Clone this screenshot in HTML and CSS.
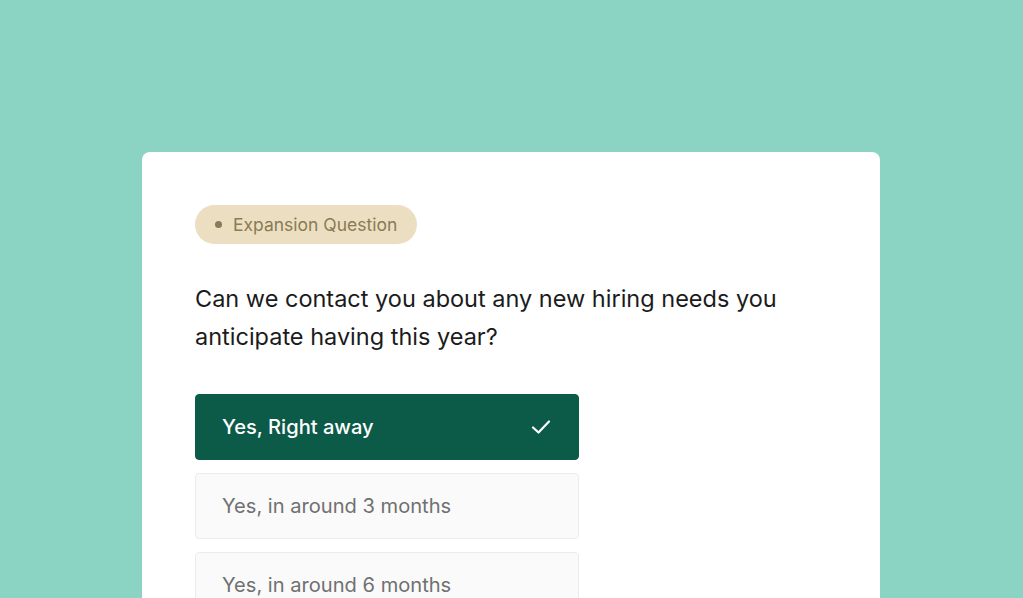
FILE: index.html
```html
<!DOCTYPE html>
<html>
<head>
<meta charset="utf-8">
<link rel="stylesheet" href="styles.css">
</head>
<body>
<div class="page">
  <div class="card">
    <div class="badge"><span class="dot"></span><span>Expansion Question</span></div>
    <h1 class="question">Can we contact you about any new hiring needs you anticipate having this year?</h1>
    <div class="options">
      <div class="option selected">
        <span>Yes, Right away</span>
        <svg class="check" width="20" height="16" viewBox="0 0 20 16"><path d="M2 8.5 L7.5 13.5 L18 2.5" fill="none" stroke="#fff" stroke-width="2.2" stroke-linecap="round" stroke-linejoin="round"/></svg>
      </div>
      <div class="option"><span>Yes, in around 3 months</span></div>
      <div class="option"><span>Yes, in around 6 months</span></div>
    </div>
  </div>
</div>
</body>
</html>
```
FILE: styles.css
```css
html, body {
  margin: 0;
  padding: 0;
  height: 100%;
  overflow: hidden;
}
body {
  background: #8bd3c3;
  font-family: Inter, "Noto Sans", sans-serif;
}
.page {
  padding: 152px 143px 0 142px;
}
.card {
  background: #ffffff;
  border-radius: 8px 8px 0 0;
  padding: 53px 53px 0 53px;
  height: 446px;
  overflow: hidden;
  box-sizing: border-box;
}
.badge {
  display: inline-flex;
  align-items: center;
  gap: 11px;
  height: 39px;
  padding: 0 20px 0 20px;
  border-radius: 20px;
  background: #ecdfc1;
  color: #8a7a55;
  font-size: 17.5px;
  letter-spacing: 0;
  box-sizing: border-box;
}
.dot {
  width: 7px;
  height: 7px;
  border-radius: 50%;
  background: #8a7a55;
}
.question {
  margin: 36px 0 0 0;
  max-width: 600px;
  font-size: 23.5px;
  font-weight: 400;
  line-height: 38px;
  color: #1b1b1b;
  letter-spacing: 0;
}
.options {
  margin-top: 38px;
  width: 384px;
  display: flex;
  flex-direction: column;
  gap: 13px;
}
.option {
  height: 66px;
  box-sizing: border-box;
  flex-shrink: 0;
  border: 1px solid #ececec;
  border-radius: 4px;
  background: #fafafa;
  display: flex;
  align-items: center;
  justify-content: space-between;
  padding: 0 26px;
  font-size: 20.1px;
  color: #707070;
  letter-spacing: 0;
}
.option.selected {
  background: #0c5a48;
  border-color: #0c5a48;
  color: #ffffff;
  font-weight: 500;
}
.check {
  margin-right: 1px;
}
```
